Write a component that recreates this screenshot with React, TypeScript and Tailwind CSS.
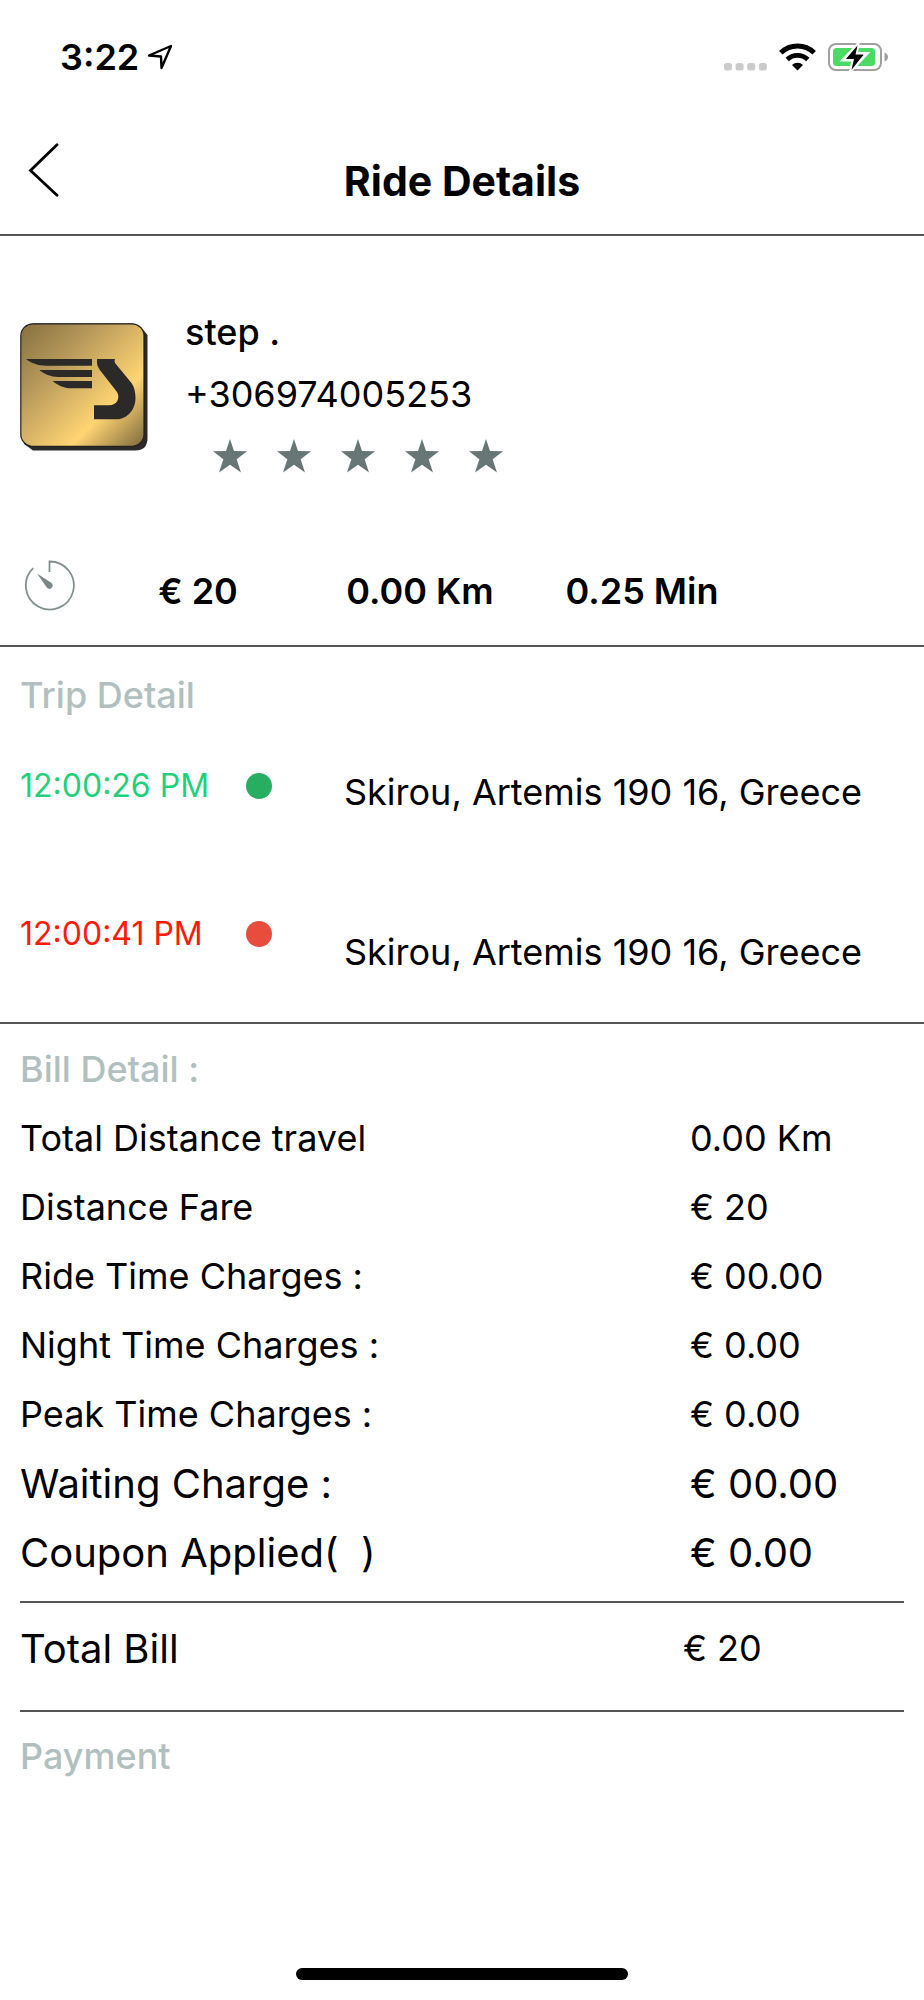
import type { ReactNode } from "react";

const STATS = ["€ 20", "0.00 Km", "0.25 Min"];

const BILL_ROWS = [
    { label: "Total Distance travel", value: "0.00 Km", large: false },
    { label: "Distance Fare", value: "€ 20", large: false },
    { label: "Ride Time Charges :", value: "€ 00.00", large: false },
    { label: "Night Time Charges :", value: "€ 0.00", large: false },
    { label: "Peak Time Charges :", value: "€ 0.00", large: false },
    { label: "Waiting Charge :", value: "€ 00.00", large: true },
    { label: "Coupon Applied(  )", value: "€ 0.00", large: true },
];

function StatusBar() {
    return (
        <div className="flex items-center justify-between pt-[37px] pl-[60px] pr-9">
            <div className="flex items-center gap-2">
                <span className="text-[36px] leading-10 font-semibold">3:22</span>
                <svg width="26" height="26" viewBox="0 0 26 26" fill="none" stroke="black" strokeWidth="2.4" strokeLinejoin="round" aria-hidden="true">
                    <path d="M24 2 L2 11.5 L14 12.5 L14.5 24 Z" />
                </svg>
            </div>
            <div className="flex items-center gap-3">
                <svg width="43" height="28" viewBox="0 0 43 28" fill="#cbcbcb" aria-hidden="true">
                    <rect x="0" y="20" width="8" height="7.5" rx="2.5" />
                    <rect x="11.6" y="20" width="8" height="7.5" rx="2.5" />
                    <rect x="23.2" y="20" width="8" height="7.5" rx="2.5" />
                    <rect x="34.8" y="20" width="8" height="7.5" rx="2.5" />
                </svg>
                <svg width="37" height="28" viewBox="0 0 37 28" fill="none" stroke="black" aria-hidden="true">
                    <path d="M1.8 9.8 A24 24 0 0 1 35.2 9.8" strokeWidth="5" />
                    <path d="M8.2 16.4 A15 15 0 0 1 28.8 16.4" strokeWidth="4.8" />
                    <path d="M13 22 A8 8 0 0 1 24 22 L18.5 27.5 Z" fill="black" stroke="none" />
                </svg>
                <svg width="60" height="28" viewBox="0 0 60 28" fill="none" aria-hidden="true">
                    <rect x="1" y="1" width="52" height="26" rx="7" stroke="#a0a0a0" strokeWidth="2" />
                    <rect x="5" y="5" width="42" height="18" rx="3.5" fill="#4cd964" />
                    <path d="M56.5 9.5 Q60 11 60 14 Q60 17 56.5 18.5 Z" fill="#a0a0a0" />
                    <path d="M30 1 L15 17 H25 L22.5 28 L39 10.5 H28.5 Z" fill="black" stroke="white" strokeWidth="3" />
                    <path d="M29.5 2.5 L18 16 H26 L23.5 27 L35.5 11.5 H27.5 Z" fill="black" />
                </svg>
            </div>
        </div>
    );
}

function Logo() {
    return (
        <svg width="128" height="128" viewBox="0 0 128 128" role="img" aria-label="Driver">
            <defs>
                <linearGradient id="gold" x1="0" y1="0" x2="1" y2="1">
                    <stop offset="0" stopColor="#85703f" />
                    <stop offset="0.3" stopColor="#b5975a" />
                    <stop offset="0.7" stopColor="#ffd473" />
                    <stop offset="0.98" stopColor="#85703f" />
                </linearGradient>
            </defs>
            <path d="M13 0.5 H113 L121 4 L127.5 12 V115 Q127.5 127.5 115 127.5 H13 L4 121 Z" fill="#2b2a29" />
            <rect x="0.8" y="0.8" width="123.2" height="122.5" rx="12" fill="url(#gold)" stroke="#222" strokeWidth="1.2" />
            <g fill="#2b2a29">
                <path d="M6 36 H72 V42.7 H26 C18 42.7 11 40 6 36 Z" />
                <path d="M19.3 47 H72 V54 H38 C31 54 24 51 19.3 47 Z" />
                <path d="M32.7 58 H72 V65.3 H51 C44 65.3 37 62 32.7 58 Z" />
                <path d="M77 36 H95 Q94 38 95 40 L111.7 60.3 C114.5 64.5 115.5 70 115.5 75 C115.5 88 106 96.3 96.5 96.3 H74 V82.3 H89 C97 82.3 100.5 75 97 69 L79.5 46.5 Q77 43 77 40 Z" />
            </g>
        </svg>
    );
}

function Star() {
    return (
        <svg width="34" height="34" viewBox="0 0 34 34" fill="#697676" aria-hidden="true">
            <path d="M17 0 L21 12 L34 12.2 L23.7 20.2 L28 33.5 L17 25.8 L6 33.5 L10.3 20.2 L0 12.2 L13 12 Z" />
        </svg>
    );
}

function TimerIcon() {
    return (
        <svg width="51" height="51" viewBox="0 0 51 51" fill="none" stroke="#839090" strokeWidth="1.8" aria-hidden="true">
            <path d="M25.5 12 V1.5 A24 24 0 1 1 9.2 8.2" />
            <path d="M13 13.5 L27.5 23 A3.2 3.2 0 0 1 23 27.8 Z" fill="#7a8787" stroke="none" />
        </svg>
    );
}

function SectionTitle({ children }: { children: ReactNode }) {
    return <h2 className="text-[36px] leading-12 font-medium text-[#b2bfbf]">{children}</h2>;
}

export default function RideDetails() {
    return (
        <div className="flex min-h-screen flex-col bg-white font-['Inter',sans-serif] text-black">
            <StatusBar />

            <header className="mt-[66px] grid grid-cols-[1fr_auto_1fr] items-end border-b-2 border-[#555] px-7 pb-[29px]">
                <button type="button" aria-label="Back" className="mb-2 justify-self-start">
                    <svg width="31" height="54" viewBox="0 0 31 54" fill="none" stroke="black" strokeWidth="2.8" strokeLinecap="round">
                        <path d="M29 1.8 L2.5 27.5 L29 52.2" />
                    </svg>
                </button>
                <h1 className="text-[41px] leading-12 font-bold">Ride Details</h1>
            </header>

            <main>
                <section className="border-b-2 border-[#555] pt-[65px] pb-[23px]">
                    <div className="flex items-start gap-[37px] px-5">
                        <div className="pt-[22px]">
                            <Logo />
                        </div>
                        <div className="text-[36px] leading-[62px]">
                            <p className="font-medium">step .</p>
                            <p>+306974005253</p>
                            <div className="flex h-[62px] items-center gap-[30px] pl-7" role="img" aria-label="5 stars">
                                {[1, 2, 3, 4, 5].map((n) => <Star key={n} />)}
                            </div>
                        </div>
                    </div>
                    <div className="mt-[73px] flex items-start pl-6">
                        <TimerIcon />
                        <div className="ml-3 grid w-[74%] grid-cols-3 text-center text-[36px] leading-[62px] font-semibold">
                            {STATS.map((stat) => <span key={stat}>{stat}</span>)}
                        </div>
                    </div>
                </section>

                <section className="border-b-2 border-[#555] px-5 pt-6 pb-[46px]">
                    <SectionTitle>Trip Detail</SectionTitle>
                    <div className="mt-[43px] flex items-start leading-12">
                        <time className="w-[226px] text-[32px] leading-12 text-[#1fd17d]">12:00:26 PM</time>
                        <span className="mt-[11px] size-[26px] rounded-full bg-[#27ae60]" />
                        <p className="ml-[72px] pt-1.5 text-[36px] leading-12">Skirou, Artemis 190 16, Greece</p>
                    </div>
                    <div className="mt-[94px] flex items-start leading-12">
                        <time className="w-[226px] text-[32px] leading-12 text-[#ff1a0a]">12:00:41 PM</time>
                        <span className="mt-[11px] size-[26px] rounded-full bg-[#e74c3c]" />
                        <p className="ml-[72px] pt-[18px] text-[36px] leading-12">Skirou, Artemis 190 16, Greece</p>
                    </div>
                </section>

                <section className="px-5 pt-[21px]">
                    <SectionTitle>Bill Detail :</SectionTitle>
                    <table className="mt-[11px] w-full text-left leading-[69px]">
                        <tbody>
                            {BILL_ROWS.map((row) => (
                                <tr key={row.label} className={row.large ? "text-[40px]" : "text-[36px]"}>
                                    <th scope="row" className="font-normal whitespace-pre">{row.label}</th>
                                    <td className="w-[214px]">{row.value}</td>
                                </tr>
                            ))}
                        </tbody>
                    </table>
                    <div className="mt-3.5 flex justify-between border-y-2 border-[#555] pt-[11px] pb-[27px] leading-[69px]">
                        <span className="text-[40px]">Total Bill</span>
                        <span className="w-[221px] text-[36px]">€ 20</span>
                    </div>
                </section>

                <section className="px-5 pt-5">
                    <SectionTitle>Payment</SectionTitle>
                </section>
            </main>

            <div className="mx-auto mt-auto mb-5 h-3 w-[36%] rounded-full bg-black" />
        </div>
    );
}
